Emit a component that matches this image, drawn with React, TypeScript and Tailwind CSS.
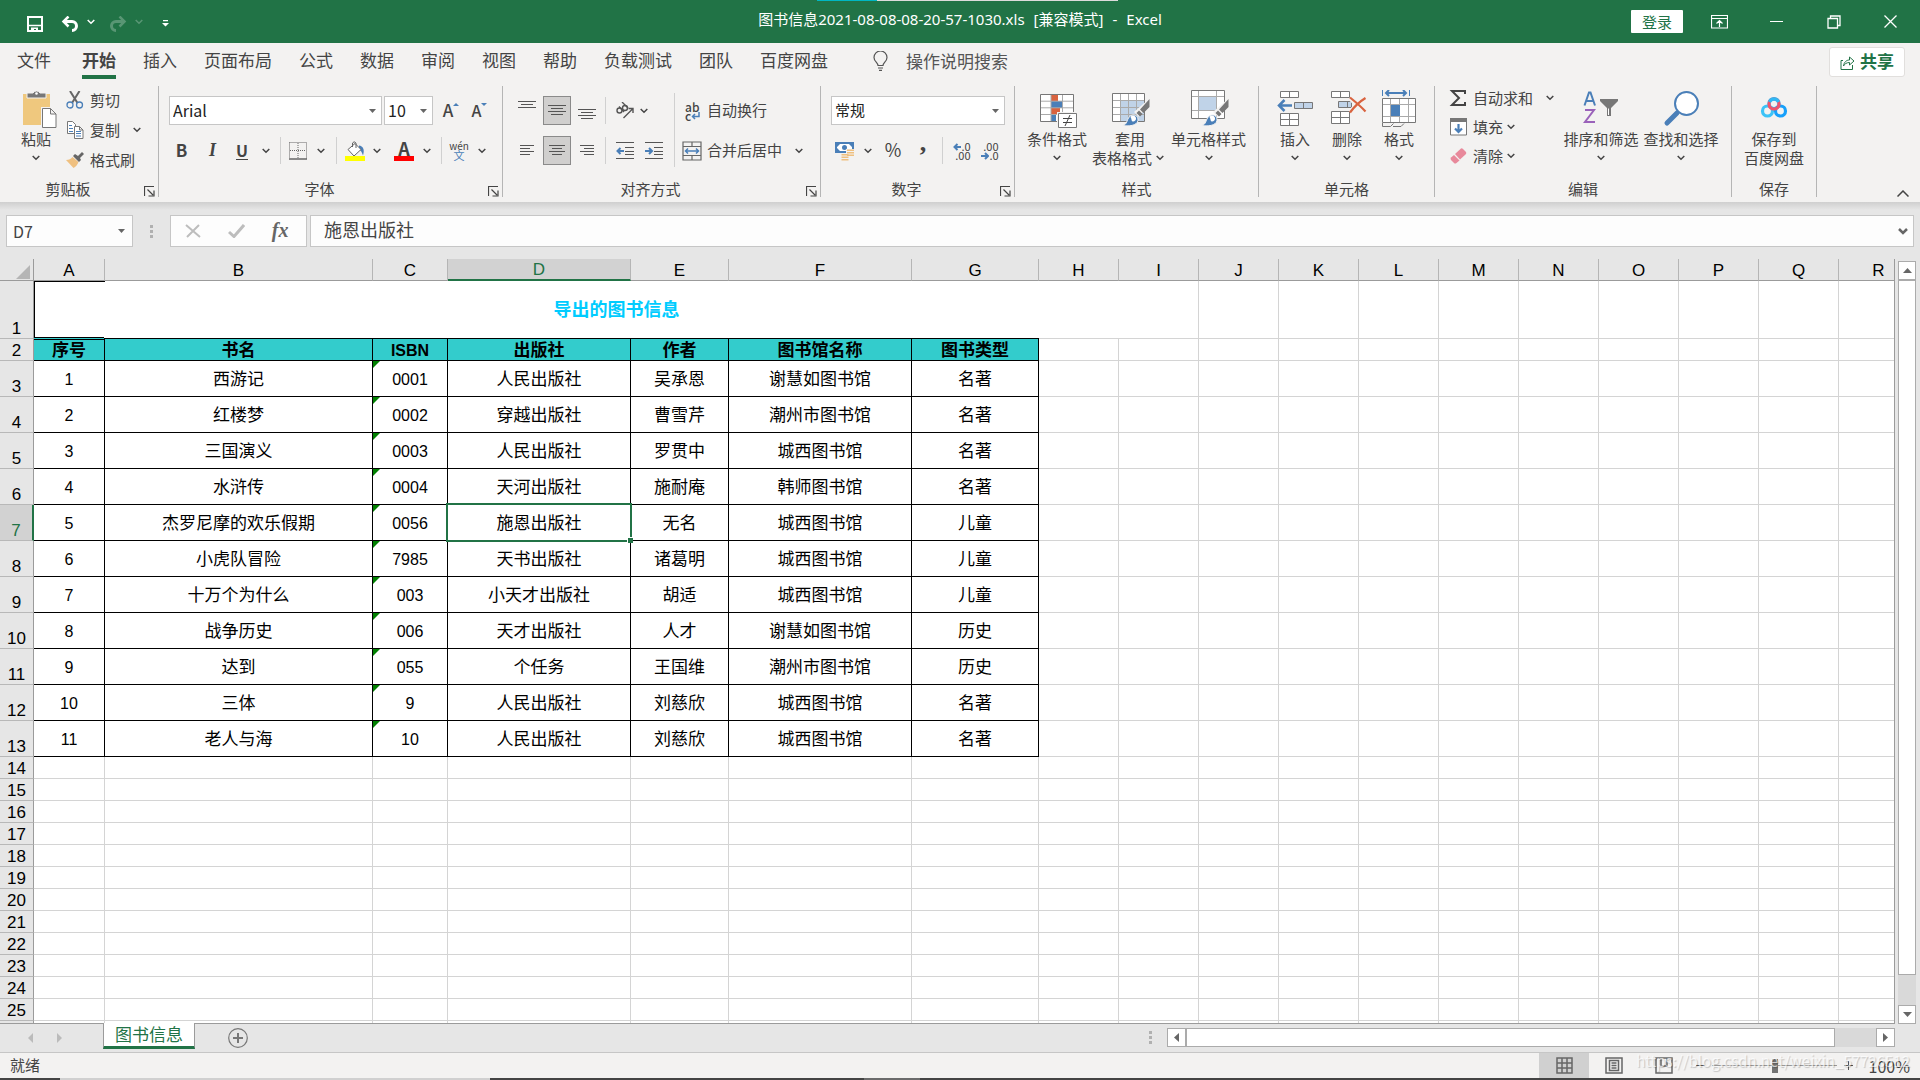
import type { ReactNode } from "react";
import clsx from "clsx";

const tabs = ["文件", "开始", "插入", "页面布局", "公式", "数据", "审阅", "视图", "帮助", "负载测试", "团队", "百度网盘"];

const headers = ["序号", "书名", "ISBN", "出版社", "作者", "图书馆名称", "图书类型"];

const books = [
  ["1", "西游记", "0001", "人民出版社", "吴承恩", "谢慧如图书馆", "名著"],
  ["2", "红楼梦", "0002", "穿越出版社", "曹雪芹", "潮州市图书馆", "名著"],
  ["3", "三国演义", "0003", "人民出版社", "罗贯中", "城西图书馆", "名著"],
  ["4", "水浒传", "0004", "天河出版社", "施耐庵", "韩师图书馆", "名著"],
  ["5", "杰罗尼摩的欢乐假期", "0056", "施恩出版社", "无名", "城西图书馆", "儿童"],
  ["6", "小虎队冒险", "7985", "天书出版社", "诸葛明", "城西图书馆", "儿童"],
  ["7", "十万个为什么", "003", "小天才出版社", "胡适", "城西图书馆", "儿童"],
  ["8", "战争历史", "006", "天才出版社", "人才", "谢慧如图书馆", "历史"],
  ["9", "达到", "055", "个任务", "王国维", "潮州市图书馆", "历史"],
  ["10", "三体", "9", "人民出版社", "刘慈欣", "城西图书馆", "名著"],
  ["11", "老人与海", "10", "人民出版社", "刘慈欣", "城西图书馆", "名著"],
];

const columns = [
  { name: "A", width: 71 },
  { name: "B", width: 268 },
  { name: "C", width: 75 },
  { name: "D", width: 183 },
  { name: "E", width: 98 },
  { name: "F", width: 183 },
  { name: "G", width: 127 },
  ..."HIJKLMNOPQR".split("").map((name) => ({ name, width: 80 })),
];

const emptyRows = [14, 15, 16, 17, 18, 19, 20, 21, 22, 23, 24, 25];

const Chevron = ({ className = "" }: { className?: string }) => (
  <span className={clsx("flex shrink-0 items-center justify-center", className)}>
    <svg width="8" height="6" viewBox="0 0 8 6" fill="none" stroke="currentColor" strokeWidth="1.5">
      <path d="M.7 1 4 4.3 7.3 1" />
    </svg>
  </span>
);

const Triangle = () => (
  <svg width="7" height="4" viewBox="0 0 7 4" fill="#666">
    <path d="M0 0h7L3.500 4z" />
  </svg>
);

const Dots = () => (
  <span className="flex flex-col gap-[2px]">
    <i className="size-[3px] bg-[#b0b0b0]" />
    <i className="size-[3px] bg-[#b0b0b0]" />
    <i className="size-[3px] bg-[#b0b0b0]" />
  </span>
);

const Sep = () => <span className="mx-[5px] h-[27px] w-px shrink-0 bg-[#d0d0d0]" />;

const Tool = ({ label, className, active, children }: { label: string; className: string; active?: boolean; children: ReactNode }) => (
  <button
    aria-label={label}
    className={clsx("flex h-[29px] shrink-0 items-center justify-center", active && "border border-[#8a8a8a] bg-[#d0cfce]", className)}
  >
    {children}
  </button>
);

const Group = ({ title, launcher, className, children }: { title: string; launcher?: boolean; className: string; children: ReactNode }) => (
  <section className={clsx("flex h-[111px] shrink-0 flex-col border-r border-[#b5b5b5]", className)}>
    <div className="flex flex-1">{children}</div>
    <div className="flex h-4 items-center">
      <h2 className="flex-1 text-center leading-4">{title}</h2>
      {launcher && (
        <button aria-label={`${title}设置`} className="flex h-4 w-[22px] items-end pl-2">
          <svg width="11" height="11" viewBox="0 0 11 11" fill="none" stroke="#444">
            <path d="M.5 10V.500H10M3.500 3.500 9 9M10 4.500V10H4.500" strokeWidth="1.200" />
          </svg>
        </button>
      )}
    </div>
  </section>
);

const BigButton = ({ icon, label, second, className }: { icon: ReactNode; label: string; second?: ReactNode; className: string }) => (
  <button className={clsx("flex shrink-0 flex-col items-center pt-1 leading-[19px] whitespace-nowrap", className)}>
    <span className="mb-px h-[38px]">{icon}</span>
    <span>{label}</span>
    <span className="flex h-[19px] items-center">{second ?? <Chevron />}</span>
  </button>
);

const SmallButton = ({ icon, label, chevron }: { icon: ReactNode; label: string; chevron?: string }) => (
  <button className="flex h-[18px] items-center gap-[6px] leading-[18px] whitespace-nowrap">
    <span className="w-[18px]">{icon}</span>
    <span className="flex items-center">
      {label}
      {chevron && <Chevron className={chevron} />}
    </span>
  </button>
);

/* lines of text for the alignment buttons: [x, y, width] */
const Lines = ({ rows }: { rows: number[][] }) => (
  <svg width="20" height="19" viewBox="0 0 20 19" fill="#555">
    {rows.map(([x, y, w]) => (
      <rect key={y} x={x} y={y} width={w} height="1" />
    ))}
  </svg>
);

const PasteIcon = () => (
  <svg width="36" height="38" viewBox="0 0 36 38" className="ml-[6px]">
    <path d="M2 4h27v31H2z" fill="#efc87e" />
    <path d="M6 8V3h6a4 4 0 0 1 7 0h6v5z" fill="#777" stroke="#f3f2f1" strokeWidth="1" />
    <circle cx="15.500" cy="3.500" r="1.300" fill="#fff" />
    <path d="M20 17h10l6 6v15H20z" fill="#f3f2f1" />
    <path d="M21.500 18.500h8l5.500 5.500v13.500H21.500zM29.500 18.500V24H35" fill="#fff" stroke="#777" />
  </svg>
);

const CutIcon = () => (
  <svg width="18" height="18" viewBox="0 0 18 18" fill="none">
    <path d="m4 0 7.500 12M13.500 0 6 12" stroke="#666" strokeWidth="2" />
    <circle cx="4" cy="14" r="3" stroke="#4a7fb8" strokeWidth="1.300" />
    <circle cx="13.500" cy="14" r="3" stroke="#4a7fb8" strokeWidth="1.300" />
  </svg>
);

const CopyIcon = () => (
  <svg width="18" height="18" viewBox="0 0 18 18" fill="#fff" stroke="#777">
    <path d="M1.500.500h5l3 3v9h-8z" />
    <path d="M3 4.500h3M3 7.500h4M3 10.500h4" stroke="#4a7fb8" />
    <path d="M8.500 5.500h5l3.500 3.500v8.500H8.500zM13.500 5.500V9H17" />
    <path d="M10 10.500h5M10 12.500h5M10 15h5" stroke="#4a7fb8" />
  </svg>
);

const BrushIcon = () => (
  <svg width="18" height="16" viewBox="0 0 18 16">
    <path d="M0 8c3 0 5-1 6.500-3l6 5c-1 3-3 5-5 6z" fill="#efc080" />
    <path d="m7 4 2-2 3 2 4-4 2 2-4 4 1 2-2 2z" fill="#666" />
  </svg>
);

const BordersIcon = () => (
  <svg width="18" height="18" viewBox="0 0 18 18" fill="none" stroke="#666">
    <path d="M.5.5h17v16M.5.5v16M9 1v16M1 8.500h16" strokeDasharray="1 1" />
    <path d="M0 17h18" strokeWidth="1.500" />
  </svg>
);

const FillIcon = () => (
  <svg width="20" height="20" viewBox="0 0 20 20">
    <path d="M14 4.500c4 .5 6 4 4 10-1-3-2-5-4-6z" fill="#4a7fb8" />
    <path d="m3 8.500 7-6 6 6-7 6.500z" fill="#fff" stroke="#666" />
    <path d="M7.500 6V2q1.500-2.500 3.500 0v5" fill="none" stroke="#666" />
    <path d="M0 15h20v5H0z" fill="#ff0" />
  </svg>
);

const ConditionalIcon = () => (
  <svg width="38" height="38" viewBox="0 0 38 38" className="ml-[3px]">
    <path d="M.500 4.500h33v27H.500z" fill="#fff" stroke="#777" />
    <path d="M11 5h7v6h-7zM11 18h9v6h-9z" fill="#d9633f" />
    <path d="M11 11h11v7H11zM11 25h5v6h-5z" fill="#4a7fb8" />
    <path d="M11 5v26M22.500 5v26M1 11.200h32M1 17.800h32M1 24.500h32" stroke="#aaa" fill="none" />
    <path d="M17 22h21v16H17z" fill="#f3f2f1" />
    <path d="M18.500 23.500h18v14h-18z" fill="#fff" stroke="#777" />
    <path d="M23 28.500h9M23 32.500h9M30 25l-5 11" stroke="#444" fill="none" />
  </svg>
);

const BrushOverlay = () => (
  <>
    <path d="m38 8-16 14 5 5L38 13z" fill="#f3f2f1" />
    <path d="M37.500 9v8l-6 6-3.500-3.500zM27 20.500l3.500 3.500-2.500 2.500-3.500-3.500z" fill="#777" />
    <path d="M10 35.500c5-1 4-3 6.500-7.500s9-4 9.500 1-5 8-16 6.500z" fill="#4a7fb8" stroke="#f3f2f1" />
    <path d="M18.500 27c2-2.500 5-1.500 5.500 1s-2 4-3.500 3.500-.500-2.500-2-4.500z" fill="#fff" />
  </>
);

const TableFormatIcon = () => (
  <svg width="38" height="38" viewBox="0 0 38 38" className="ml-[2px]">
    <path d="M.500 3.500h32v28H.500z" fill="#fff" stroke="#777" />
    <path d="M9 11h23v20H9z" fill="#c0d3e8" />
    <path d="M8.500 4v27M16.500 4v27M24.500 4v27M1 10.500h31M1 17.500h31M1 24.500h31" stroke="#aaa" fill="none" />
    <BrushOverlay />
  </svg>
);

const CellStyleIcon = () => (
  <svg width="38" height="38" viewBox="0 0 38 38" className="ml-[2px]">
    <path d="M.500.500h33v28H.500z" fill="#fff" stroke="#777" />
    <path d="M8 7h17v13H8z" fill="#c0d3e8" />
    <path d="M7.500 1v27M25.500 1v27M1 6.500h32M1 20.500h32" stroke="#aaa" fill="none" />
    <BrushOverlay />
  </svg>
);

const InsertIcon = () => (
  <svg width="36" height="38" viewBox="0 0 36 38" fill="#fff" stroke="#777">
    <path d="M3.500 1.500h18v6h-18zM12.500 1.500v6M3.500 23.500h18v12h-18zM12.500 23.500v12M3.500 29.500h18" />
    <path d="M17.500 12.500h18v6h-18zM26.500 12.500v6" fill="#c0d3e8" />
    <path d="M15 15.500H2M7.500 10 2 15.500 7.500 21" fill="none" stroke="#4a7fb8" strokeWidth="2.500" />
  </svg>
);

const DeleteIcon = () => (
  <svg width="36" height="38" viewBox="0 0 36 38" fill="#fff" stroke="#777" className="ml-[3px]">
    <path d="M.500 1.500h18v6H.500zM9.500 1.500v6M.500 21.500h18v12H.500zM9.500 21.500v12M.500 27.500h18" />
    <path d="M7.500 11.500h13v6h-13zM16.500 11.500v6" fill="#c0d3e8" />
    <path d="m19 8 15 14M34 9 19 22" stroke="#f3f2f1" strokeWidth="5" />
    <path d="M19 7.500c5 4 10 8 15.500 14M34.500 8C28 12 23 17 19 22.500" fill="none" stroke="#d9633f" strokeWidth="2.200" />
  </svg>
);

const FormatIcon = () => (
  <svg width="36" height="38" viewBox="0 0 36 38" fill="none" stroke="#777">
    <path d="M1.500 0v6M28.500 0v6" stroke="#4a7fb8" />
    <path d="M5 3h20M8 0 5 3l3 3M22 0l3 3-3 3" stroke="#4a7fb8" strokeWidth="2" />
    <path d="M1.500 8.500h33v24h-33z" fill="#fff" />
    <path d="M9.500 9v23M18.500 9v23M27.500 9v23M2 14.500h32M2 26.500h32" stroke="#aaa" />
    <path d="M10 15h9v11h-9z" fill="#4a7fb8" stroke="none" />
    <path d="M1.500 33v3.500h8l3-3M12 36.500h8l3-3" />
  </svg>
);

const SortIcon = () => (
  <svg width="36" height="38" viewBox="0 0 36 38" fill="none">
    <path d="M1.500 15.500 6 2.500h1.500l4.500 13M3 11h7.500" stroke="#4a7fb8" strokeWidth="2" />
    <path d="M2 20h9L2 32h10" stroke="#9a62ba" strokeWidth="2" />
    <path d="M17 9h18v2l-7 7v8h-4v-8l-7-7z" fill="#777" />
    <path d="M25.500 18.500v6.500" stroke="#fff" />
  </svg>
);

const SearchIcon = () => (
  <svg width="36" height="38" viewBox="0 0 36 38">
    <path d="M4 33 14 23" stroke="#4a7fb8" strokeWidth="5" strokeLinecap="round" />
    <circle cx="23.500" cy="13.500" r="11.500" fill="#fff" stroke="#4a7fb8" strokeWidth="2" />
  </svg>
);

const NetdiskIcon = () => (
  <svg width="28" height="38" viewBox="0 0 28 38" fill="none" strokeWidth="3.200">
    <circle cx="14" cy="13.500" r="5" stroke="#2fb8f5" />
    <circle cx="7.500" cy="21" r="5" stroke="#3cc3f7" />
    <circle cx="20.500" cy="21" r="5" stroke="#16a0fb" />
    <circle cx="14" cy="14" r="5" stroke="#f0546c" />
    <path d="M9.500 12a5 5 0 0 1 9 0" stroke="#2fb8f5" />
  </svg>
);

const ArrowGlyph = ({ right }: { right?: boolean }) => (
  <path
    d={right ? "M0 9h6M4 6l3 3-3 3" : "M8 9H2M4.500 6l-3 3 3 3"}
    fill="none"
    stroke="#4a7fb8"
    strokeWidth="2"
  />
);

const TitleBar = () => (
  <header className="grid h-[43px] grid-cols-[1fr_auto_1fr] bg-[#217346] text-[15px] text-white">
    <div className="flex h-[43px] items-center pt-1 pl-[27px]">
      <button aria-label="保存">
        <svg width="16" height="16" viewBox="0 0 16 16" fill="none" stroke="#fff">
          <path d="M1 1h14v14H1z" strokeWidth="2" />
          <path d="M1 9.500h14" strokeWidth="1.500" />
          <path d="M4 16v-4.500h7V16h-2v-3H7v3z" fill="#fff" stroke="none" />
        </svg>
      </button>
      <button aria-label="撤消" className="ml-[18px]">
        <svg width="18" height="16" viewBox="0 0 18 16" fill="none" stroke="#fff" strokeWidth="3">
          <path d="M2 5.500h9a4.500 4.500 0 0 1 0 9" />
          <path d="M7.500.500 2.500 5.500l5 5" strokeWidth="2.500" />
        </svg>
      </button>
      <Chevron className="ml-2 pb-1" />
      <button aria-label="恢复" className="ml-[14px] opacity-25">
        <svg width="18" height="16" viewBox="0 0 18 16" fill="none" stroke="#fff" strokeWidth="3">
          <path d="M16 5.500H7a4.500 4.500 0 0 0 0 9" />
          <path d="m10.500.500 5 5-5 5" strokeWidth="2.500" />
        </svg>
      </button>
      <Chevron className="ml-2 pb-1 opacity-25" />
      <button aria-label="自定义快速访问工具栏" className="ml-[19px]">
        <svg width="7" height="7" viewBox="0 0 7 7" fill="#fff">
          <path d="M1 0h5v1.200H1zM0 3h7L3.500 6.500z" />
        </svg>
      </button>
    </div>
    <div>
      <div className="flex h-px pl-[59px]">
        <i className="w-[60px] bg-[#00b7c3]" />
        <i className="w-[241px] bg-[#dcdcdc]" />
      </div>
      <h1 className="flex gap-[9px] pt-[6px] font-['Noto_Sans','Noto_Sans_CJK_SC',sans-serif] leading-6">
        <span>图书信息2021-08-08-08-20-57-1030.xls</span>
        <span>[兼容模式]</span>
        <span>-</span>
        <span>Excel</span>
      </h1>
    </div>
    <div className="flex items-center justify-end">
      <button className="mt-[10px] mr-2 h-[23px] w-[52px] self-start rounded-[1px] bg-white leading-[22px] text-[#217346]">登录</button>
      <button aria-label="功能区显示选项" className="flex w-[57px] justify-center">
        <svg width="17" height="14" viewBox="0 0 17 14" fill="none" stroke="#fff">
          <path d="M.500.500h16v12.500H.500zM.500 3.500h16M8.500 12V5.500M5.500 8.500l3-3 3 3" strokeWidth="1.200" />
        </svg>
      </button>
      <button aria-label="最小化" className="flex w-[57px] justify-center">
        <i className="h-px w-[13px] bg-white" />
      </button>
      <button aria-label="向下还原" className="flex w-[57px] justify-center">
        <svg width="14" height="14" viewBox="0 0 14 14" fill="none" stroke="#fff" strokeWidth="1.300">
          <path d="M1 3.500h9.500V13H1zM3.500 3.500V1H13v9.500h-2.500" />
        </svg>
      </button>
      <button aria-label="关闭" className="mr-px flex w-[57px] justify-center">
        <svg width="13" height="13" viewBox="0 0 13 13" stroke="#fff" strokeWidth="1.300">
          <path d="m.5.5 12 12M12.500.5l-12 12" />
        </svg>
      </button>
    </div>
  </header>
);

const Tabs = () => (
  <nav className="flex h-[39px] items-start pr-[15px] pl-[17px] text-[17px] whitespace-nowrap">
    {tabs.map((tab) => (
      <a
        key={tab}
        href="#"
        className={clsx(
          "h-9 leading-[34px]",
          tab === "文件" ? "mr-[31px]" : "mr-[27px]",
          tab === "开始" && "border-b-4 border-[#217346] font-bold",
        )}
      >
        {tab}
      </a>
    ))}
    <label className="ml-[18px] flex h-9 items-center gap-[18px] text-[#555]">
      <svg width="15" height="20" viewBox="0 0 15 20" fill="none" stroke="#555" strokeWidth="1.200">
        <path d="M5 14.500c0-3-4-4-4-8a6.500 6.500 0 0 1 13 0c0 4-4 5-4 8zM5 17h5M6 19.300h3" />
      </svg>
      <input placeholder="操作说明搜索" className="w-40 bg-transparent outline-none placeholder:text-[#555]" />
    </label>
    <button className="mt-1 ml-auto flex h-[30px] w-[76px] items-center justify-center gap-[5px] rounded-[3px] border border-[#e1dfdd] bg-white leading-[26px] font-bold text-[#217346]">
      <svg width="15" height="15" viewBox="0 0 15 15" fill="none" stroke="#217346">
        <path d="M3 5.500H1v9h11.500V10M3.500 11c.5-4 3-6 6-6V2l4.500 4-4.500 4V7.500c-3 0-5 1.500-6 3.500z" />
      </svg>
      <span className="pb-[2px]">共享</span>
    </button>
  </nav>
);

const Ribbon = () => (
  <div className="flex h-[120px] pt-1 text-[15px]">
    <Group title="剪贴板" launcher className="w-[159px]">
      <BigButton icon={<PasteIcon />} label="粘贴" className="ml-[15px] w-[42px]" />
      <div className="ml-[9px] flex flex-col gap-3 pt-[5px]">
        <SmallButton icon={<CutIcon />} label="剪切" />
        <SmallButton icon={<CopyIcon />} label="复制" chevron="w-[34px]" />
        <SmallButton icon={<BrushIcon />} label="格式刷" />
      </div>
    </Group>

    <Group title="字体" launcher className="w-[344px]">
      <div className="flex flex-col gap-[11px] pt-[10px]">
        <div className="flex items-center pl-[10px]">
          <label className="flex h-[29px] w-[213px] items-center border border-[#c6c6c6] bg-white pr-[5px] pl-[3px]">
            <input aria-label="字体" defaultValue="Arial" className="min-w-0 flex-1 pb-[2px] text-[16px] text-[#222] outline-none" />
            <Triangle />
          </label>
          <label className="ml-[2px] flex h-[29px] w-[49px] items-center border border-[#c6c6c6] bg-white pr-[5px] pl-[3px]">
            <input aria-label="字号" defaultValue="10" className="min-w-0 flex-1 pb-[2px] text-[16px] text-[#222] outline-none" />
            <Triangle />
          </label>
          <Tool label="增大字号" className="ml-1 w-[28px]">
            <span className="pb-[2px] text-[17px] font-medium">A</span>
            <svg width="6" height="15" viewBox="0 0 6 15" fill="#4a7fb8">
              <path d="M0 3h6L3 0z" />
            </svg>
          </Tool>
          <Tool label="减小字号" className="w-[29px]">
            <span className="pb-[2px] text-[16px] font-medium">A</span>
            <svg width="6" height="15" viewBox="0 0 6 15" fill="#4a7fb8">
              <path d="M0 0h6L3 3z" />
            </svg>
          </Tool>
        </div>
        <div className="flex items-center pl-[7px]">
          <Tool label="加粗" className="w-[31px]">
            <b className="pb-[2px] text-[17px]">B</b>
          </Tool>
          <Tool label="倾斜" className="w-[31px]">
            <b className="font-['Liberation_Serif',serif] text-[18px] italic">I</b>
          </Tool>
          <Tool label="下划线" className="w-7">
            <b className="border-b border-[#444] text-[16px] leading-[17px]">U</b>
          </Tool>
          <Chevron className="w-[19px]" />
          <Sep />
          <Tool label="边框" className="w-6">
            <BordersIcon />
          </Tool>
          <Chevron className="w-[21px]" />
          <Sep />
          <Tool label="填充颜色" className="w-[26px]">
            <FillIcon />
          </Tool>
          <Chevron className="w-[18px]" />
          <Tool label="字体颜色" className="ml-[5px] w-[26px]">
            <b className="h-5 w-5 border-b-[5px] border-[#f00] text-center text-[18px] leading-[14px]">A</b>
          </Tool>
          <Chevron className="w-[19px]" />
          <Sep />
          <Tool label="拼音指南" className="w-6">
            <span className="flex flex-col items-center">
              <span className="text-[10px] leading-[9px]">wén</span>
              <span className="text-[11px] leading-[10px] text-[#4a7fb8]">文</span>
            </span>
          </Tool>
          <Chevron className="w-[22px]" />
        </div>
      </div>
    </Group>

    <Group title="对齐方式" launcher className="w-[318px]">
      <div className="flex flex-col gap-[11px] pt-[10px] pl-[10px]">
        <div className="flex items-center">
          <Tool label="顶端对齐" className="w-[30px] pr-[2px]">
            <Lines rows={[[1, 0, 18], [4, 3, 12], [1, 6, 18]]} />
          </Tool>
          <Tool label="垂直居中" active className="w-7">
            <Lines rows={[[1, 4, 18], [4, 7, 12], [1, 10, 18], [4, 13, 12]]} />
          </Tool>
          <Tool label="底端对齐" className="w-[29px] pl-[3px]">
            <Lines rows={[[1, 8, 18], [4, 11, 12], [1, 14, 18], [4, 17, 12]]} />
          </Tool>
          <Sep />
          <Tool label="方向" className="w-7">
            <svg width="20" height="18" viewBox="0 0 20 18" fill="none" stroke="#555" strokeWidth="1.400">
              <circle cx="4.500" cy="8.500" r="2.500" />
              <path d="M4 4.500 9 10M7 0l6 6" />
              <circle cx="10" cy="6" r="2.500" />
              <path d="m8.500 16 9-9M13.500 6.500h4.500v4.500" />
            </svg>
          </Tool>
          <Chevron className="w-3 pr-[3px]" />
        </div>
        <div className="flex items-center">
          <Tool label="左对齐" className="w-[30px] pr-[2px]">
            <Lines rows={[[3, 4, 14], [3, 7, 10], [3, 10, 14], [3, 13, 10]]} />
          </Tool>
          <Tool label="居中" active className="w-7">
            <Lines rows={[[2, 4, 16], [5, 7, 10], [2, 10, 16], [5, 13, 10]]} />
          </Tool>
          <Tool label="右对齐" className="w-[29px] pl-[3px]">
            <Lines rows={[[3, 4, 14], [7, 7, 10], [3, 10, 14], [7, 13, 10]]} />
          </Tool>
          <Sep />
          <Tool label="减少缩进量" className="w-7">
            <svg width="18" height="17" viewBox="0 0 18 17" fill="#555">
              <path d="M0 0h18v1H0zM9 5h9v1H9zM9 9h9v1H9zM9 12h9v1H9zM0 16h18v1H0z" />
              <ArrowGlyph />
            </svg>
          </Tool>
          <Tool label="增加缩进量" className="w-[30px]">
            <svg width="18" height="17" viewBox="0 0 18 17" fill="#555">
              <path d="M0 0h18v1H0zM9 5h9v1H9zM9 9h9v1H9zM9 12h9v1H9zM0 16h18v1H0z" />
              <ArrowGlyph right />
            </svg>
          </Tool>
        </div>
      </div>
      <span className="mt-[7px] ml-[5px] h-[74px] w-px bg-[#d0d0d0]" />
      <div className="flex flex-col gap-[11px] pt-[10px] pl-[7px]">
        <button className="flex h-[29px] items-center gap-[5px]">
          <span className="flex w-5 flex-col pl-[3px] text-left text-[12px] leading-[9px] font-medium">
            <span>ab</span>
            <span className="flex items-center">
              c
              <svg width="9" height="9" viewBox="0 0 9 9" fill="none" stroke="#4a7fb8" strokeWidth="1.500">
                <path d="M8 1v4.500H1.500M4 3 1.500 5.500 4 8" />
              </svg>
            </span>
          </span>
          自动换行
        </button>
        <button className="flex h-[29px] items-center gap-[5px]">
          <svg width="20" height="20" viewBox="0 0 20 20" fill="none" stroke="#666">
            <path d="M1 1h18v18H1zM1 5.500h18M1 14.500h18M10 1v4.500M10 14.500V19" strokeWidth="1.200" />
            <path d="M3.500 10h13M6 7.500 3.500 10 6 12.500M14 7.500l2.500 2.500-2.500 2.500" stroke="#4a7fb8" strokeWidth="1.500" />
          </svg>
          <span className="flex">
            合并后居中
            <Chevron className="w-[34px]" />
          </span>
        </button>
      </div>
    </Group>

    <Group title="数字" launcher className="w-[194px]">
      <div className="flex flex-col gap-[11px] pt-[10px] pl-[10px]">
        <label className="flex h-[29px] w-[174px] items-center border border-[#c6c6c6] bg-white pr-[5px] pl-[3px]">
          <select aria-label="数字格式" className="flex-1 appearance-none text-[#222] outline-none">
            <option>常规</option>
          </select>
          <Triangle />
        </label>
        <div className="flex items-center">
          <Tool label="会计数字格式" className="w-7">
            <svg width="20" height="20" viewBox="0 0 20 20">
              <path d="M0 1h19v11H0z" fill="#4a7fb8" />
              <path d="M2 3h15v7H2z" fill="#fff" />
              <path d="M2 3h3L2 6zM17 3h-3l3 3zM2 10h3L2 7z" fill="#4a7fb8" />
              <circle cx="9.500" cy="6.500" r="2.500" fill="#4a7fb8" />
              <path d="M11 8h8v8h-5v4H6v-8h5z" fill="#f3f2f1" />
              <path d="M12 8.500h7v1.500h-7zM12 11h7v1.500h-7zM12 13.500h7V15h-7zM6.500 13h7v1.500h-7zM6.500 15.500h7V17h-7zM6.500 18h7v1.500h-7z" fill="#efc080" />
            </svg>
          </Tool>
          <Chevron className="w-[18px]" />
          <Tool label="百分比样式" className="w-8">
            <span className="pb-[2px] text-[18px]">%</span>
          </Tool>
          <Tool label="千位分隔样式" className="w-7 pb-4">
            <span className="font-['Liberation_Serif',serif] text-[26px] leading-4 font-bold">,</span>
          </Tool>
          <Sep />
          <Tool label="增加小数位数" className="w-7">
            <span className="flex flex-col items-end text-[11px] leading-[9px]">
              <span className="flex">
                <svg width="8" height="9" viewBox="0 4 8 9">
                  <ArrowGlyph />
                </svg>
                .0
              </span>
              <span>.00</span>
            </span>
          </Tool>
          <Tool label="减少小数位数" className="w-7">
            <span className="flex flex-col items-end text-[11px] leading-[9px]">
              <span>.00</span>
              <span className="flex">
                <svg width="8" height="9" viewBox="0 4 8 9">
                  <ArrowGlyph right />
                </svg>
                .0
              </span>
            </span>
          </Tool>
        </div>
      </div>
    </Group>

    <Group title="样式" className="w-[244px]">
      <div className="flex gap-1 pl-[10px]">
        <BigButton icon={<ConditionalIcon />} label="条件格式" className="w-16" />
        <BigButton
          icon={<TableFormatIcon />}
          label="套用"
          second={
            <>
              表格格式
              <Chevron className="w-[16px]" />
            </>
          }
          className="w-[74px]"
        />
        <BigButton icon={<CellStyleIcon />} label="单元格样式" className="w-[75px]" />
      </div>
    </Group>

    <Group title="单元格" className="w-[176px]">
      <div className="flex gap-1 pl-3">
        <BigButton icon={<InsertIcon />} label="插入" className="w-12" />
        <BigButton icon={<DeleteIcon />} label="删除" className="w-12" />
        <BigButton icon={<FormatIcon />} label="格式" className="w-12" />
      </div>
    </Group>

    <Group title="编辑" className="w-[297px]">
      <div className="flex w-32 shrink-0 flex-col gap-[11px] pt-[3px] pl-[14px]">
        <SmallButton
          icon={
            <svg width="18" height="18" viewBox="0 0 18 18" fill="none" stroke="#444">
              <path d="M16 5V2H3l7 7-7 7h13v-3" strokeWidth="2" />
            </svg>
          }
          label="自动求和"
          chevron="w-[34px]"
        />
        <SmallButton
          icon={
            <svg width="18" height="18" viewBox="0 0 18 18">
              <path d="M1.500.500h16v16.500h-16z" fill="#fff" stroke="#777" />
              <path d="M1 0h17v4H1z" fill="#777" />
              <path d="M9.500 6v8M6 10.500l3.500 3.500 3.500-3.500" fill="none" stroke="#4a7fb8" strokeWidth="2.200" />
            </svg>
          }
          label="填充"
          chevron="w-4"
        />
        <SmallButton
          icon={
            <svg width="18" height="18" viewBox="0 0 18 18">
              <path d="m6 7 6-5.500q1-.5 2 .5l3 3q.5 1 0 2l-6 5.500z" fill="#e8899b" />
              <path d="m5 8 5.500 5.500L7.500 16q-1.500 1-2.500 0l-3-3q-1-1.500 0-2.500z" fill="#e8899b" />
            </svg>
          }
          label="清除"
          chevron="w-4"
        />
      </div>
      <div className="flex gap-1">
        <BigButton icon={<SortIcon />} label="排序和筛选" className="w-[76px]" />
        <BigButton icon={<SearchIcon />} label="查找和选择" className="w-[76px]" />
      </div>
    </Group>

    <Group title="保存" className="w-[85px]">
      <BigButton icon={<NetdiskIcon />} label="保存到" second="百度网盘" className="w-full" />
    </Group>

    <button aria-label="折叠功能区" className="mr-[11px] mb-[5px] ml-auto self-end">
      <svg width="12" height="7" viewBox="0 0 12 7" fill="none" stroke="#444" strokeWidth="1.500">
        <path d="m.5 6.500 5.500-5.500 5.500 5.500" />
      </svg>
    </button>
  </div>
);

const FormulaBar = () => (
  <div className="flex h-[57px] items-start bg-[#e6e6e6] bg-[linear-gradient(#cfcfcf,#e6e6e6_8px)] px-[6px] pt-[13px]">
    <label className="flex h-8 w-[127px] items-center border border-[#c6c6c6] bg-[#fdfdfd] pr-[7px] pl-[6px]">
      <input aria-label="名称框" defaultValue="D7" className="min-w-0 flex-1 text-[16px] outline-none" />
      <Triangle />
    </label>
    <span className="flex h-8 w-[37px] items-center justify-center">
      <Dots />
    </span>
    <div className="flex h-8 w-[137px] items-center justify-around border border-[#c6c6c6] bg-[#fdfdfd] pr-1">
      <button aria-label="取消">
        <svg width="16" height="14" viewBox="0 0 16 14" fill="none" stroke="#bdbdbd" strokeWidth="2">
          <path d="m1 1 14 12M14 1 2 13" />
        </svg>
      </button>
      <button aria-label="输入">
        <svg width="17" height="14" viewBox="0 0 17 14" fill="none" stroke="#bdbdbd" strokeWidth="3">
          <path d="m1 8 5 4.500L16 1" />
        </svg>
      </button>
      <button className="pb-[2px] font-['Liberation_Serif',serif] text-[20px] leading-6 font-bold text-[#666] italic">fx</button>
    </div>
    <label className="ml-[3px] flex h-8 flex-1 items-center border border-[#c6c6c6] bg-[#fdfdfd] pr-[5px] pl-[13px]">
      <input aria-label="编辑栏" defaultValue="施恩出版社" className="min-w-0 flex-1 pb-1 text-[18px] outline-none" />
      <svg width="10" height="7" viewBox="0 0 10 7" fill="none" stroke="#666" strokeWidth="2.500">
        <path d="m1 1 4 4 4-4" />
      </svg>
    </label>
  </div>
);

const RowHead = ({ n, className = "border-b" }: { n?: number; className?: string }) => (
  <th
    scope="row"
    className={clsx(
      "border-b-[#b8b8b8] align-bottom font-normal",
      n === 7 ? "border-r-2 border-r-[#217346] bg-[#d2d2d2] text-[#217346]" : "border-r border-r-[#9b9b9b] bg-[#e6e6e6]",
      className,
    )}
  >
    {n}
  </th>
);

const EmptyCells = ({ count, className = "border-b" }: { count: number; className?: string }) => (
  <>
    {Array.from({ length: count }, (_, i) => (
      <td key={i} className={clsx("border-r border-[#d4d4d4]", className)} />
    ))}
  </>
);

const Sheet = () => (
  <div className="flex min-h-0 flex-1 bg-[#e6e6e6]">
    <div className="min-w-0 flex-1 overflow-hidden border-r border-b border-[#9b9b9b] bg-white">
      <table className="w-[1919px] table-fixed border-separate border-spacing-0 text-center font-['Liberation_Sans','Noto_Sans_CJK_SC',sans-serif] text-[17px] leading-[18px] text-black">
        <colgroup>
          <col style={{ width: 34 }} />
          {columns.map((c) => (
            <col key={c.name} style={{ width: c.width }} />
          ))}
        </colgroup>
        <thead>
          <tr className="h-[22px] bg-[#e6e6e6]">
            <td className="border-r border-b border-[#9b9b9b]">
              <svg width="14" height="14" viewBox="0 0 14 14" className="mt-1 ml-4" fill="#b5b5b5">
                <path d="M14 0v14H0z" />
              </svg>
            </td>
            {columns.map((c) => (
              <th
                key={c.name}
                scope="col"
                className={clsx(
                  "border-r border-r-[#b5b5b5] pt-[2px] font-normal",
                  c.name === "D" ? "border-b-2 border-b-[#217346] bg-[#d2d2d2] text-[#217346]" : "border-b border-b-[#9b9b9b]",
                )}
              >
                {c.name}
              </th>
            ))}
          </tr>
        </thead>
        <tbody>
          <tr className="h-[57px]">
            <RowHead n={1} className="" />
            {/* merged A1:I1, only the A part carries a top border */}
            <td
              colSpan={9}
              className="relative border-r border-l border-r-[#d4d4d4] border-l-black text-[18px] font-bold text-[#00ccff]"
            >
              <i className="absolute top-0 left-0 h-px w-[70px] bg-black" />
              导出的图书信息
            </td>
            <EmptyCells count={9} className="" />
          </tr>
          <tr className="h-[23px]">
            <RowHead n={2} className="border-y border-t-[#b8b8b8]" />
            {headers.map((h, i) => (
              <td key={h} className={clsx("relative border-y border-r border-black bg-[#33cccc] pt-[2px] font-bold", i === 2 && "text-[16px]")}>
                {i === 0 && <i className="absolute inset-x-0 -top-[2px] h-[3px] border-y border-black bg-[#33cccc]" />}
                {h}
              </td>
            ))}
            <EmptyCells count={11} className="border-y" />
          </tr>
          {books.map((book, r) => (
            <tr key={book[0]} className="h-9">
              <RowHead n={r + 3} />
              {book.map((value, c) => (
                <td key={c} className={clsx("relative border-r border-b border-black pt-[2px]", (c === 0 || c === 2) && "text-[16px]")}>
                  {c === 2 && <i className="absolute top-0 left-0 border-t-[7px] border-r-[7px] border-t-[#008000] border-r-transparent" />}
                  {value}
                  {r === 4 && c === 3 && (
                    <span className="absolute -inset-[2px] z-10 border-2 border-[#217346]">
                      <i className="absolute -right-[3px] -bottom-[3px] size-[6px] border-t border-l border-white bg-[#217346]" />
                    </span>
                  )}
                </td>
              ))}
              <EmptyCells count={11} />
            </tr>
          ))}
          {emptyRows.map((n) => (
            <tr key={n} className="h-[22px]">
              <RowHead n={n} />
              <EmptyCells count={18} />
            </tr>
          ))}
          <tr className="h-[22px]">
            <RowHead />
            <EmptyCells count={18} />
          </tr>
        </tbody>
      </table>
    </div>
    <div className="flex w-[25px] flex-col pt-[2px] pr-[4px] pl-[3px]">
      <button aria-label="向上滚动" className="flex h-[19px] items-center justify-center border border-[#ababab] bg-white">
        <svg width="9" height="5" viewBox="0 0 9 5" fill="#666">
          <path d="M0 5h9L4.500 0z" />
        </svg>
      </button>
      <div className="flex flex-1 flex-col bg-[#d9d9d9] pb-[30px]">
        <div className="flex-1 border border-[#ababab] bg-white" />
      </div>
      <button aria-label="向下滚动" className="flex h-[19px] items-center justify-center border border-[#ababab] bg-white">
        <svg width="9" height="5" viewBox="0 0 9 5" fill="#666">
          <path d="M0 0h9L4.500 5z" />
        </svg>
      </button>
    </div>
  </div>
);

const SheetTabs = () => (
  <div className="flex h-7 items-center bg-[#e6e6e6] pr-[25px]">
    <div className="flex w-[103px] gap-6 pl-7">
      <button aria-label="上一个工作表">
        <svg width="5" height="10" viewBox="0 0 5 10" fill="#bbb">
          <path d="M5 0v10L0 5z" />
        </svg>
      </button>
      <button aria-label="下一个工作表">
        <svg width="5" height="10" viewBox="0 0 5 10" fill="#bbb">
          <path d="M0 0v10l5-5z" />
        </svg>
      </button>
    </div>
    <button className="-mt-px h-[26px] w-[92px] self-start border-x border-b-3 border-x-[#9b9b9b] border-b-[#217346] bg-white pb-[2px] text-[17px] leading-[20px] text-[#217346]">
      图书信息
    </button>
    <button aria-label="新工作表" className="ml-[33px]">
      <svg width="20" height="20" viewBox="0 0 20 20" fill="none" stroke="#777">
        <circle cx="10" cy="10" r="9.300" strokeWidth="1.200" />
        <path d="M10 5v10M5 10h10" strokeWidth="2" />
      </svg>
    </button>
    <div className="ml-auto flex w-[746px] items-center pb-px">
      <Dots />
      <button aria-label="向左滚动" className="ml-[15px] flex h-[19px] w-[19px] items-center justify-center border border-[#ababab] bg-white">
        <svg width="5" height="9" viewBox="0 0 5 9" fill="#666">
          <path d="M5 0v9L0 4.500z" />
        </svg>
      </button>
      <div className="h-[19px] flex-1 bg-[#d9d9d9] pr-[41px]">
        <div className="h-full border border-[#ababab] bg-white" />
      </div>
      <button aria-label="向右滚动" className="flex h-[19px] w-[19px] items-center justify-center border border-[#ababab] bg-white">
        <svg width="5" height="9" viewBox="0 0 5 9" fill="#666">
          <path d="M0 0v9l5-4.500z" />
        </svg>
      </button>
    </div>
  </div>
);

const StatusBar = () => (
  <footer className="relative flex h-[26px] items-center border-t border-[#c6c6c6] pr-[10px] pl-[10px] text-[15px]">
    <span>就绪</span>
    <button aria-label="普通" className="ml-auto flex h-full w-[50px] items-center justify-center bg-[#d0d0d0]">
      <svg width="17" height="17" viewBox="0 0 17 17" fill="none" stroke="#666" strokeWidth="1.500">
        <path d="M1 1h15v15H1zM6 1v15M11 1v15M1 6h15M1 11h15" />
      </svg>
    </button>
    <button aria-label="页面布局" className="flex h-full w-[50px] items-center justify-center">
      <svg width="18" height="17" viewBox="0 0 18 17" fill="none" stroke="#666" strokeWidth="1.500">
        <path d="M1 1h16v15H1zM4.500 3.500h9v10h-9zM6.500 6h5M6.500 8.500h5M6.500 11h5" />
      </svg>
    </button>
    <button aria-label="分页预览" className="flex h-full w-[50px] items-center justify-center">
      <svg width="18" height="17" viewBox="0 0 18 17" fill="none" stroke="#666" strokeWidth="1.500">
        <path d="M1 1h16v15H1zM6 1v8h6V1" />
      </svg>
    </button>
    <button aria-label="缩小" className="ml-[7px] flex h-full w-4 items-center">
      <i className="h-px w-[9px] bg-[#555]" />
    </button>
    <input
      type="range"
      aria-label="缩放"
      defaultValue={50}
      className="h-[14px] w-[125px] appearance-none bg-[linear-gradient(#999,#999)] bg-[length:100%_1px] bg-center bg-no-repeat [&::-webkit-slider-thumb]:h-[14px] [&::-webkit-slider-thumb]:w-[6px] [&::-webkit-slider-thumb]:appearance-none [&::-webkit-slider-thumb]:bg-[#737373]"
    />
    <button aria-label="放大" className="ml-[7px]">
      <svg width="9" height="9" viewBox="0 0 9 9" stroke="#555">
        <path d="M4.500 0v9M0 4.500h9" />
      </svg>
    </button>
    <span className="w-[57px] text-right text-[16px]">100%</span>
    <span className="pointer-events-none absolute -top-px right-[10px] text-[15px] leading-[18px] text-white/70 [text-shadow:1px_1px_1px_rgba(0,0,0,0.2)]">
      https://blog.csdn.net/weixin_57726512
    </span>
  </footer>
);

const App = () => {
  return (
    <div className="flex h-screen flex-col overflow-hidden bg-[#f3f2f1] font-['Noto_Sans_CJK_SC','Noto_Sans',sans-serif] text-[#444]">
      <TitleBar />
      <Tabs />
      <Ribbon />
      <FormulaBar />
      <Sheet />
      <SheetTabs />
      <StatusBar />
      <div className="flex h-[2px] bg-[#444]">
        <i className="ml-[60px] w-[430px] bg-[#d0d0d0]" />
        <i className="ml-[374px] w-14 bg-[#6b6b6b]" />
      </div>
    </div>
  );
};

export default App;
